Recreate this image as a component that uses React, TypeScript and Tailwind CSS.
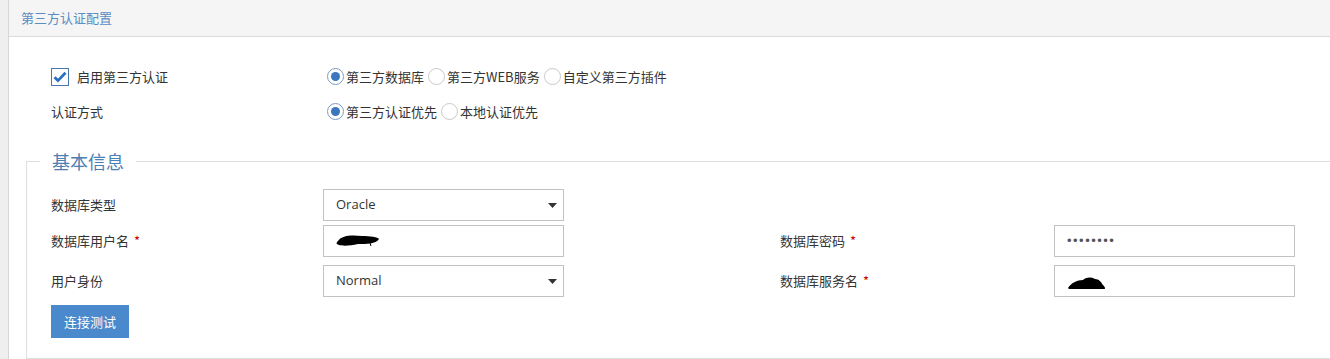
import React from 'react'

const FONT = { fontFamily: '"Noto Sans CJK SC", "Open Sans", sans-serif' }

function Radio({ checked, label }: { checked?: boolean; label: string }) {
  return (
    <label className="flex items-center mr-[4px]">
      <span
        className={`flex h-[17px] w-[17px] items-center justify-center rounded-full border bg-white ${
          checked ? 'border-[#7d9cc2]' : 'border-[#c9c9c9]'
        }`}
      >
        {checked && <span className="h-[9px] w-[9px] rounded-full bg-[#3a77bd]" />}
      </span>
      <span className="ml-[2px] text-[13px] text-[#333]">{label}</span>
    </label>
  )
}

function Checkbox() {
  return (
    <span className="flex h-[18px] w-[18px] items-center justify-center border border-[#4877b0] bg-white">
      <svg width="14" height="12" viewBox="0 0 14 12">
        <path d="M1.5 6.2 L5 9.6 L12.5 1.8" fill="none" stroke="#2a6fc6" strokeWidth="2.8" />
      </svg>
    </span>
  )
}

function Arrow() {
  return (
    <svg width="9" height="5" viewBox="0 0 9 5" className="mr-[6px]">
      <polygon points="0,0 9,0 4.5,5" fill="#333" />
    </svg>
  )
}

function Blob({ wide }: { wide?: boolean }) {
  // redacted value scribble
  return wide ? (
    <svg width="44" height="12" viewBox="0 0 44 12">
      <path d="M2 6 C6 0 16 0 26 1 C34 1 42 2 43 4 C40 9 30 9 22 9 C14 11 6 11 3 10 C0 9 0 8 2 6 Z" fill="#000" />
      <path d="M34 8 L35 11" stroke="#000" strokeWidth="1" />
    </svg>
  ) : (
    <svg width="40" height="14" viewBox="0 0 40 14">
      <path d="M1 12 C4 7 10 4 16 4 C20 1 24 1 28 3 C32 3 34 6 36 9 C38 11 39 13 37 13 L2 13 Z" fill="#000" />
    </svg>
  )
}

function Label({ text, required }: { text: string; required?: boolean }) {
  return (
    <div className="flex h-8 items-center text-[13px] text-[#333]">
      {text}
      {required && <span className="ml-[5px] text-[#c00]">*</span>}
    </div>
  )
}

function Box({ children, select }: { children?: React.ReactNode; select?: boolean }) {
  return (
    <div className="flex h-8 w-[241px] items-center justify-between border border-[#c2c2c2] bg-white pl-[12px] text-[13px] text-[#333]">
      <div className="flex items-center" style={{ fontFamily: '"Open Sans", "Noto Sans CJK SC", sans-serif' }}>
        {children}
      </div>
      {select && <Arrow />}
    </div>
  )
}

export default function App() {
  return (
    <div className="flex h-[359px] w-[1330px] overflow-hidden bg-white" style={FONT}>
      <div className="w-[9px] shrink-0 border-r border-[#d6d6d6] bg-[#efefef]" />
      <div className="flex min-w-0 flex-1 flex-col">
        <div className="flex h-[37px] shrink-0 items-center border-b border-[#dcdcdc] bg-[#f5f5f5] pl-[12px] text-[13px] text-[#5b8dc1]">
          第三方认证配置
        </div>

        <div className="flex flex-col pl-[42px] pt-[22px]">
          <div className="flex h-[35px] items-center">
            <div className="flex w-[276px] items-center">
              <Checkbox />
              <span className="ml-[8px] text-[13px] text-[#333]">启用第三方认证</span>
            </div>
            <div className="flex items-center">
              <Radio checked label="第三方数据库" />
              <Radio label="第三方WEB服务" />
              <Radio label="自定义第三方插件" />
            </div>
          </div>
          <div className="flex h-[35px] items-center">
            <div className="w-[276px] text-[13px] text-[#333]">认证方式</div>
            <div className="flex items-center">
              <Radio checked label="第三方认证优先" />
              <Radio label="本地认证优先" />
            </div>
          </div>
        </div>

        <fieldset className="ml-[17px] mt-[21px] border border-r-0 border-[#dedede] pb-[20px]">
          <legend className="ml-[13px] px-[12px] text-[18px] leading-[22px] text-[#4b80b3]">基本信息</legend>
          <div className="pl-[24px]">
            <div className="mt-[17px] grid grid-cols-[272px_457px_274px_241px] gap-y-[4px]">
              <Label text="数据库类型" />
              <Box select>Oracle</Box>
              <div />
              <div />

              <Label text="数据库用户名" required />
              <Box>
                <Blob wide />
              </Box>
              <Label text="数据库密码" required />
              <Box>
                <span className="tracking-[1.5px] text-[#555]" style={{ fontFamily: '"Liberation Sans", sans-serif' }}>
                  ••••••••
                </span>
              </Box>
            </div>
            <div className="mt-[8px] grid grid-cols-[272px_457px_274px_241px]">
              <Label text="用户身份" />
              <Box select>Normal</Box>
              <Label text="数据库服务名" required />
              <Box>
                <div className="mt-[4px]">
                  <Blob />
                </div>
              </Box>
            </div>
            <button className="mt-[8px] flex h-[33px] w-[78px] items-center justify-center bg-[#4a89cb] text-[13px] text-white">
              连接测试
            </button>
          </div>
        </fieldset>
      </div>
    </div>
  )
}
